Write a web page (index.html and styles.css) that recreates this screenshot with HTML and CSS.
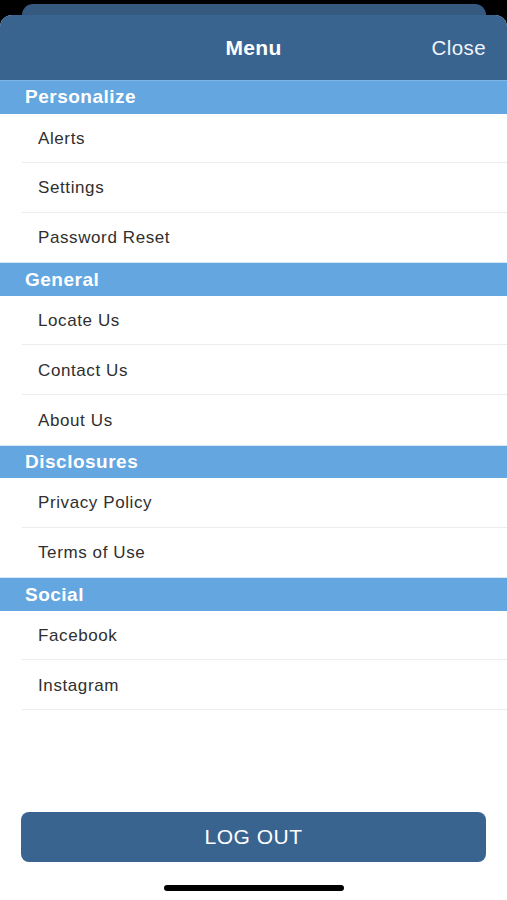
FILE: index.html
```html
<!DOCTYPE html>
<html>
<head>
<meta charset="utf-8">
<link rel="stylesheet" href="styles.css">
</head>
<body>
<div class="screen">
  <div class="back-card"></div>
  <div class="sheet">
    <header class="topbar">
      <span class="title">Menu</span>
      <span class="close">Close</span>
    </header>
    <div class="menu">
      <div class="section first">Personalize</div>
      <div class="row">Alerts</div>
      <div class="row">Settings</div>
      <div class="row">Password Reset</div>
      <div class="section">General</div>
      <div class="row">Locate Us</div>
      <div class="row">Contact Us</div>
      <div class="row">About Us</div>
      <div class="section">Disclosures</div>
      <div class="row">Privacy Policy</div>
      <div class="row">Terms of Use</div>
      <div class="section">Social</div>
      <div class="row">Facebook</div>
      <div class="row last">Instagram</div>
    </div>
    <div class="spacer"></div>
    <div class="footer">
      <button class="logout">LOG OUT</button>
      <div class="home-indicator"></div>
    </div>
  </div>
</div>
</body>
</html>
```

FILE: styles.css
```css
html, body {
  margin: 0;
  padding: 0;
  background: #000;
}
body {
  font-family: "Liberation Sans", Arial, sans-serif;
}
.screen {
  width: 507px;
  height: 900px;
  position: relative;
  overflow: hidden;
  background: #000;
  display: flex;
  flex-direction: column;
}
.back-card {
  position: absolute;
  left: 22px;
  right: 21px;
  top: 4px;
  height: 40px;
  background: #35597f;
  border-radius: 11px 11px 0 0;
}
.sheet {
  position: relative;
  margin-top: 15px;
  flex: 1;
  background: #fff;
  border-radius: 12px 12px 0 0;
  overflow: hidden;
  display: flex;
  flex-direction: column;
}
.topbar {
  height: 65px;
  background: #3a6490;
  display: flex;
  align-items: center;
  justify-content: center;
  position: relative;
  color: #fff;
}
.title {
  font-size: 21px;
  font-weight: bold;
  letter-spacing: 0.3px;
  margin-top: 1px;
}
.close {
  position: absolute;
  right: 21px;
  top: 21px;
  font-size: 20.5px;
  letter-spacing: 0.4px;
  color: #f1f5fa;
}
.menu {
  display: flex;
  flex-direction: column;
}
.section {
  height: 33.5px;
  background: #63a6e0;
  color: #fff;
  font-weight: bold;
  font-size: 19px;
  letter-spacing: 0.5px;
  padding-left: 25px;
  display: flex;
  align-items: center;
  border-top: 1px solid #d6e7f6;
  box-sizing: border-box;
}
.section.first {
  border-top-color: #7fb4e4;
}
.row {
  height: 49.6px;
  margin-left: 22px;
  padding-left: 16px;
  padding-top: 2px;
  display: flex;
  align-items: center;
  font-size: 17px;
  letter-spacing: 0.6px;
  color: #2f2f2f;
  border-bottom: 1px solid #ececec;
  box-sizing: border-box;
}
.row:has(+ .section) {
  border-bottom: none;
}
.spacer {
  flex: 1;
}
.footer {
  display: flex;
  flex-direction: column;
  align-items: center;
  padding-bottom: 9px;
}
.logout {
  width: 465px;
  height: 50px;
  background: #3a6490;
  border: none;
  border-radius: 8px;
  color: #fff;
  font-family: "Liberation Sans", Arial, sans-serif;
  font-size: 21px;
  letter-spacing: 0.5px;
  margin-bottom: 23px;
}
.home-indicator {
  width: 180px;
  height: 6px;
  border-radius: 3px;
  background: #000;
}
```
